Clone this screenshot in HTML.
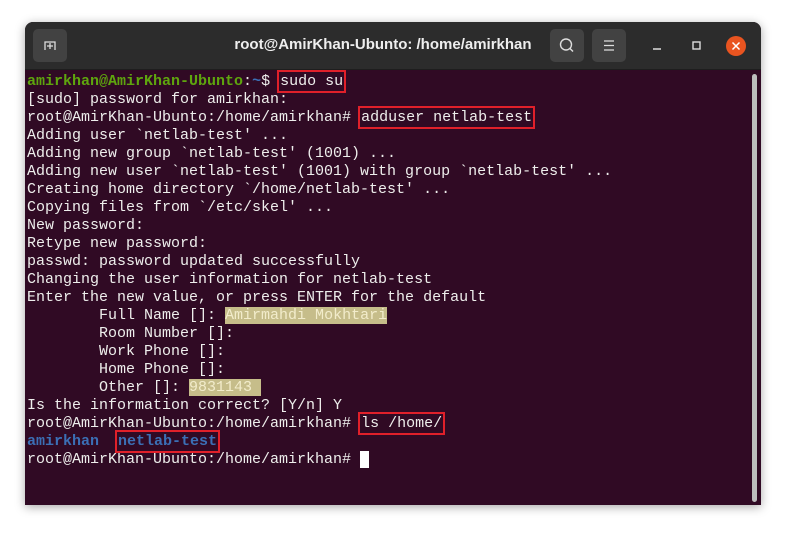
<!DOCTYPE html>
<html><head><style>
body{margin:0;width:786px;height:533px;background:#fff;position:relative;overflow:hidden;font-family:"Liberation Sans",sans-serif}
.win{position:absolute;left:25px;top:22px;width:736px;height:483px;background:#300a24;border-radius:8px 8px 0 0;box-shadow:0 2px 10px rgba(0,0,0,.35);overflow:hidden}
.tb{position:absolute;left:0;top:0;width:736px;height:47px;background:#2c2c2c;border-bottom:1px solid #1e1e1e}
.btn{position:absolute;top:7px;width:34px;height:33px;background:#424242;border-radius:5px}
.title{position:absolute;left:0;width:736px;top:14px;text-align:center;color:#eee;font-weight:bold;font-size:15px}
.term{position:absolute;left:2px;top:51px;font-family:"Liberation Mono",monospace;font-size:15px;line-height:18px;color:#eeeeec;white-space:pre}
.g{color:#5ea50e;font-weight:bold}.b{color:#3b6fb5;font-weight:bold}
.box{outline:2px solid #e0202a;padding:1px 1px}
.hl{background:#c6bd8a;color:#f2eccb}
.sb{position:absolute;left:727px;top:52px;width:5px;height:428px;background:#bdbdbd;border-radius:3px}
</style></head><body>
<div class="win">
<div class="tb">
<div class="btn" style="left:8px"><svg width="34" height="33"><path d="M12 21V13h10v8M14 17h6M17 14v6" stroke="#ddd" stroke-width="1.3" fill="none"/></svg></div>
<div class="title" style="left:-10px">root@AmirKhan-Ubunto: /home/amirkhan</div>
<div class="btn" style="left:525px"><svg width="34" height="33"><circle cx="16" cy="15.5" r="5.5" stroke="#ddd" stroke-width="1.4" fill="none"/><path d="M20 19.5l3 3" stroke="#ddd" stroke-width="1.5"/></svg></div>
<div class="btn" style="left:567px"><svg width="34" height="33"><path d="M12 12h10M12 16.5h10M12 21h10" stroke="#ddd" stroke-width="1.3"/></svg></div>
<svg style="position:absolute;left:625px;top:14px" width="100" height="22"><path d="M3 13h8" stroke="#ddd" stroke-width="1.5"/><rect x="43" y="6" width="7" height="7" stroke="#ddd" stroke-width="1.4" fill="none"/><circle cx="86" cy="10" r="10" fill="#e95420"/><path d="M82.5 6.5l7 7M89.5 6.5l-7 7" stroke="#fff" stroke-width="1.5"/></svg>
</div>
<div class="term"><span class="g">amirkhan@AmirKhan-Ubunto</span>:<span class="b">~</span>$ <span class="box">sudo su</span>
[sudo] password for amirkhan:
root@AmirKhan-Ubunto:/home/amirkhan# <span class="box">adduser netlab-test</span>
Adding user `netlab-test' ...
Adding new group `netlab-test' (1001) ...
Adding new user `netlab-test' (1001) with group `netlab-test' ...
Creating home directory `/home/netlab-test' ...
Copying files from `/etc/skel' ...
New password:
Retype new password:
passwd: password updated successfully
Changing the user information for netlab-test
Enter the new value, or press ENTER for the default
        Full Name []: <span class="hl">Amirmahdi Mokhtari</span>
        Room Number []:
        Work Phone []:
        Home Phone []:
        Other []: <span class="hl">9831143 </span>
Is the information correct? [Y/n] Y
root@AmirKhan-Ubunto:/home/amirkhan# <span class="box">ls /home/</span>
<span class="b">amirkhan</span>  <span class="box b">netlab-test</span>
root@AmirKhan-Ubunto:/home/amirkhan# <span style="background:#fff">&nbsp;</span></div>
<div class="sb"></div>
</div>
</body></html>
